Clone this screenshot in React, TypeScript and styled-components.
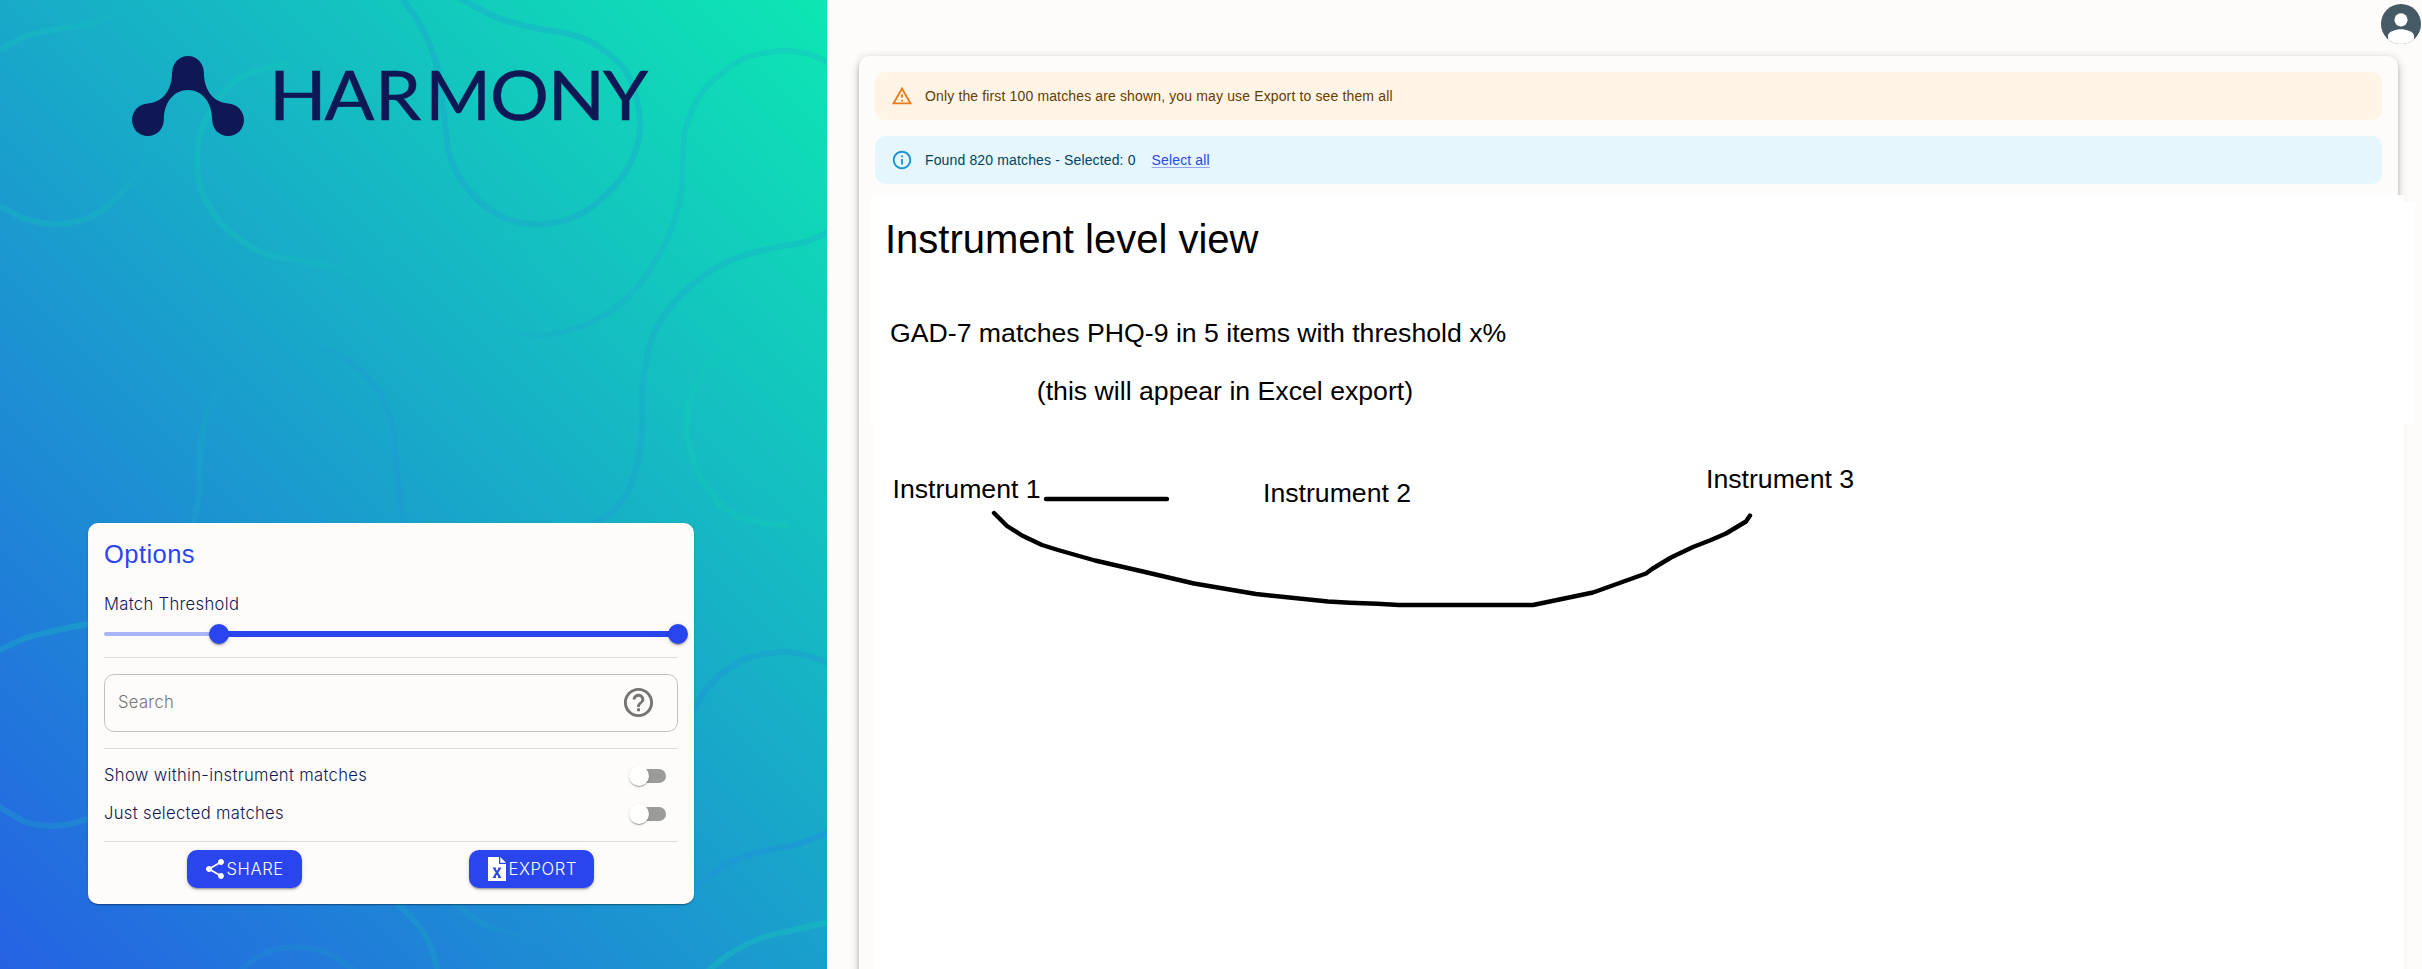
import React from "react";
import styled, { createGlobalStyle } from "styled-components";
import { MdHelpOutline, MdShare } from "react-icons/md";

const colors = {
  primary: "#2a45ed",
  navy: "#0f1854",
  paper: "#fefcfb",
};

const GlobalStyle = createGlobalStyle`
  *, *::before, *::after { box-sizing: border-box; }
  html, body { margin: 0; padding: 0; }
  body {
    background: ${colors.paper};
    font-family: "Liberation Sans", Arial, sans-serif;
    overflow: hidden;
  }
`;

const Page = styled.div`
  display: flex;
  width: 100%;
  height: 969px;
  overflow: hidden;
`;

/* ---------- Sidebar ---------- */

const Sidebar = styled.aside`
  position: relative;
  flex: 0 0 827px;
  display: flex;
  flex-direction: column;
  justify-content: space-between;
  padding: 46px 133px 65px 88px;
  background: linear-gradient(45deg, #2562e3 0%, #0de7b2 100%);
`;

const Waves = styled.svg`
  position: absolute;
  inset: 0;
  fill: none;
  stroke-width: 6;
`;

const Logo = styled.svg`
  position: relative;
  display: block;
  margin-left: 44px;
  fill: ${colors.navy};
`;

const Wordmark = styled.text`
  font-family: Lato, sans-serif;
  font-size: 67px;
  stroke: ${colors.navy};
  stroke-width: 0.5px;
`;

const OptionsCard = styled.section`
  position: relative;
  display: flex;
  flex-direction: column;
  height: 381px;
  padding: 16px;
  border-radius: 10px;
  background: ${colors.paper};
  box-shadow: 0 2px 1px -1px rgba(0, 0, 0, 0.2), 0 1px 1px rgba(0, 0, 0, 0.14),
    0 1px 3px rgba(0, 0, 0, 0.12);
  color: ${colors.navy};
  font-family: Inter, "Liberation Sans", sans-serif;
  font-size: 16.6px;
  font-weight: 300;
  letter-spacing: 0.33px;
`;

const CardTitle = styled.h2`
  margin: -1px 0 21px;
  color: ${colors.primary};
  font: 400 25.5px/32px "Liberation Sans", sans-serif;
  letter-spacing: 0.45px;
`;

const Label = styled.span`
  line-height: 26px;
`;

const Slider = styled.div`
  display: flex;
  align-items: center;
  height: 20px;
  margin: 7px 0 13px;
`;

const SliderRest = styled.div`
  width: 115px;
  height: 4px;
  border-radius: 2px;
  background: #aab5f8;
`;

const SliderRange = styled.div`
  flex: 1;
  height: 6px;
  background: ${colors.primary};
`;

const Thumb = styled.div`
  flex: none;
  width: 20px;
  height: 20px;
  margin: 0 -10px;
  border-radius: 50%;
  background: ${colors.primary};
  box-shadow: 0 3px 1px -2px rgba(0, 0, 0, 0.2), 0 2px 2px rgba(0, 0, 0, 0.14),
    0 1px 5px rgba(0, 0, 0, 0.12);
`;

const Divider = styled.hr`
  flex: none;
  width: 100%;
  height: 1px;
  margin: 0;
  border: 0;
  background: #dddcdc;
`;

const SearchBox = styled.div`
  display: flex;
  align-items: center;
  justify-content: space-between;
  height: 58px;
  margin: 16px 0;
  padding: 0 21px 2px 13px;
  border: 1px solid #c3c2c2;
  border-radius: 10px;
  color: #757472;
`;

const SwitchRows = styled.div`
  padding: 8px 0;
`;

const SwitchRow = styled.div`
  display: flex;
  align-items: center;
  justify-content: space-between;
  height: 38px;
  padding-bottom: 2px;
`;

const Switch = styled.div`
  display: flex;
  align-items: center;
  width: 34px;
  height: 14px;
  margin: 1px 12px 0 0;
  border-radius: 7px;
  background: #9b9b9a;

  &::before {
    content: "";
    width: 20px;
    height: 20px;
    margin-left: -3px;
    border-radius: 50%;
    background: #fff;
    box-shadow: 0 2px 1px -1px rgba(0, 0, 0, 0.2), 0 1px 1px rgba(0, 0, 0, 0.14),
      0 1px 3px rgba(0, 0, 0, 0.12);
  }
`;

const Actions = styled.div`
  display: flex;
  justify-content: space-around;
  margin: 8px 1px 0 -1px;
`;

const Button = styled.button<{ $width: number }>`
  display: flex;
  align-items: center;
  width: ${(p) => p.$width}px;
  height: 38px;
  padding: 0 0 1px 16px;
  border: 0;
  border-radius: 10px;
  background: ${colors.primary};
  color: #fff;
  font: inherit;
  letter-spacing: 0.6px;
  box-shadow: 0 3px 1px -2px rgba(0, 0, 0, 0.2), 0 2px 2px rgba(0, 0, 0, 0.14),
    0 1px 5px rgba(0, 0, 0, 0.12);

  svg { flex: none; margin-top: 1px; }
`;

/* ---------- Results ---------- */

const Main = styled.main`
  flex: 1;
  display: flex;
  flex-direction: column;
  padding-left: 32px;
`;

const TopBar = styled.header`
  flex: none;
  display: flex;
  justify-content: flex-end;
  height: 56px;
  padding: 4px 1px 0 0;
`;

const Results = styled.section`
  flex: none;
  display: flex;
  flex-direction: column;
  gap: 16px;
  height: 960px;
  margin-right: 24px;
  padding: 16px;
  border-radius: 10px;
  background: ${colors.paper};
  box-shadow: 0 3px 3px -2px rgba(0, 0, 0, 0.2), 0 3px 4px rgba(0, 0, 0, 0.14),
    0 1px 8px rgba(0, 0, 0, 0.12), 0 5px 12px rgba(0, 0, 0, 0.12);
`;

const Alert = styled.div<{ $tone: "warning" | "info" }>`
  flex: none;
  display: flex;
  align-items: center;
  gap: 12px;
  height: 48px;
  padding: 0 16px;
  border-radius: 10px;
  background: ${(p) => (p.$tone === "warning" ? "#fff4e5" : "#e5f6fd")};
  color: ${(p) => (p.$tone === "warning" ? "#663c00" : "#014361")};
  font-size: 14px;
  letter-spacing: 0.14px;

  svg { fill: ${(p) => (p.$tone === "warning" ? "#ed6c02" : "#0288d1")}; opacity: 0.9; }
`;

const SelectAll = styled.a`
  margin-left: 4px;
  color: ${colors.primary};
  text-decoration: underline;
  text-decoration-color: rgba(42, 69, 237, 0.45);
  text-underline-offset: 2px;
`;

const Board = styled.div`
  position: relative;
  flex: 1;
  margin: -5px -22px 0 -2px;
  background: #fff;

  &::before {
    content: "";
    position: absolute;
    top: 7px;
    left: -4px;
    right: -11px;
    height: 222px;
    background: #fff;
  }
`;

const Note = styled.div<{ $x: number; $baseline: number; $size?: number }>`
  position: absolute;
  left: ${(p) => p.$x - 873}px;
  top: ${(p) => p.$baseline - 195 - 36}px;
  line-height: 0;
  white-space: pre;
  color: #000;
  font-size: ${(p) => p.$size ?? 26.667}px;

  &::before {
    content: "";
    display: inline-block;
    height: 36px;
  }
`;

const Strokes = styled.svg`
  position: absolute;
  left: 0;
  top: 0;
  fill: none;
  stroke: #000;
  stroke-width: 4.4;
  stroke-linecap: round;
  stroke-linejoin: round;
`;

type Point = [number, number];

/* Smooth curve through every point (Catmull-Rom turned into Béziers). */
function smooth(points: Point[]): string {
  let d = `M${points[0][0]} ${points[0][1]}`;
  for (let i = 0; i < points.length - 1; i++) {
    const a = points[i - 1] ?? points[i];
    const b = points[i];
    const c = points[i + 1];
    const e = points[i + 2] ?? c;
    d += ` C${b[0] + (c[0] - a[0]) / 6} ${b[1] + (c[1] - a[1]) / 6} ${c[0] - (e[0] - b[0]) / 6} ${
      c[1] - (e[1] - b[1]) / 6
    } ${c[0]} ${c[1]}`;
  }
  return d;
}

interface Wave {
  color: string;
  points: Point[];
  /* x1, y1, x2, y2: the line is invisible at the first point, full at the second */
  fade?: [number, number, number, number];
  opacity: number;
}

const GREEN = "#12cfb4";
const BLUE = "#1f90dc";

const waves: Wave[] = [
  { color: GREEN, opacity: 0.22, fade: [135, 0, 60, 30], points: [[132, 0], [116, 13], [95, 23], [58, 29], [26, 36], [0, 50]] },
  { color: GREEN, opacity: 0.22, fade: [150, 130, 90, 215], points: [[149, 135], [140, 170], [106, 207], [82, 220], [55, 224], [26, 219], [0, 206]] },
  { color: GREEN, opacity: 0.26, fade: [390, 290, 240, 240], points: [[290, 64], [262, 69], [233, 83], [204, 123], [197, 160], [204, 197], [228, 230], [265, 253], [302, 261], [339, 269], [381, 290]] },
  { color: BLUE, opacity: 0.25, points: [[402, -2], [423, 30], [437, 67], [444, 113], [450, 157], [471, 193], [503, 217], [543, 224], [582, 213], [619, 181], [638, 143], [639, 110], [625, 70], [593, 43], [565, 33], [540, 29], [498, 18], [460, -2]] },
  { color: BLUE, opacity: 0.17, fade: [470, 320, 560, 300], points: [[830, 63], [805, 53], [779, 51], [741, 60], [704, 90], [686, 127], [683, 160], [680, 200], [662, 250], [625, 300], [580, 327], [540, 335], [498, 328], [472, 317]] },
  { color: BLUE, opacity: 0.2, points: [[830, 231], [805, 242], [768, 249], [725, 263], [683, 293], [654, 333], [643, 380], [642, 433], [635, 473], [619, 505], [590, 527]] },
  { color: GREEN, opacity: 0.3, fade: [746, 335, 700, 400], points: [[746, 340], [709, 365], [690, 400], [688, 440], [704, 482], [730, 512], [762, 523], [790, 525]] },
  { color: BLUE, opacity: 0.22, fade: [295, 340, 360, 370], points: [[302, 344], [320, 348], [344, 357], [376, 387], [392, 423], [396, 460], [400, 500], [405, 526]] },
  { color: GREEN, opacity: 0.13, fade: [235, 365, 205, 440], points: [[228, 377], [209, 407], [201, 443], [199, 493], [193, 526]] },
  { color: GREEN, opacity: 0.27, points: [[95, 623], [58, 630], [26, 638], [-2, 651]] },
  { color: GREEN, opacity: 0.2, points: [[-2, 806], [26, 822], [53, 826], [74, 823], [95, 816]] },
  { color: BLUE, opacity: 0.3, points: [[830, 664], [805, 655], [779, 652], [741, 661], [709, 686], [690, 717]] },
  { color: BLUE, opacity: 0.5, fade: [640, 969, 760, 840], points: [[830, 831], [799, 844], [768, 850], [731, 862], [693, 890], [667, 925], [651, 972]] },
  { color: GREEN, opacity: 0.32, points: [[830, 922], [794, 930], [762, 938], [731, 953], [707, 972]] },
  { color: GREEN, opacity: 0.18, points: [[393, 899], [418, 925], [431, 947], [438, 972]] },
  { color: GREEN, opacity: 0.12, fade: [545, 938, 470, 915], points: [[450, 899], [482, 923], [519, 935], [545, 937]] },
  { color: GREEN, opacity: 0.09, points: [[238, 972], [265, 953], [296, 947], [328, 953], [357, 972]] },
];

const curve: Point[] = [
  [994, 513], [1007, 526], [1022, 535.5], [1042, 545], [1058, 550], [1095, 560.5], [1145, 572],
  [1194, 583.5], [1256, 594], [1328, 601.5], [1350, 602.7], [1377, 603.7], [1399, 605], [1533, 605],
  [1593, 592.5], [1646, 573.5], [1652, 569], [1671, 557.5], [1693, 547], [1711, 540], [1726, 533.5],
  [1746, 521.5], [1750, 515.5],
];

/* letter, origin and horizontal stretch */
const letters: [string, number, number][] = [
  ["H", 137, 1.13],
  ["A", 192.5, 1.1],
  ["R", 243, 1.1],
  ["M", 293.5, 1.05],
  ["O", 358, 1.1],
  ["N", 415.8, 1.12],
  ["Y", 471, 1.08],
];

function WaveBackground() {
  return (
    <Waves width="827" height="969" viewBox="0 0 827 969">
      <defs>
        {waves.map((w, i) =>
          w.fade ? (
            <linearGradient
              key={i}
              id={`wave-${i}`}
              gradientUnits="userSpaceOnUse"
              x1={w.fade[0]}
              y1={w.fade[1]}
              x2={w.fade[2]}
              y2={w.fade[3]}
            >
              <stop offset="0" stopColor={w.color} stopOpacity="0" />
              <stop offset="1" stopColor={w.color} />
            </linearGradient>
          ) : null
        )}
      </defs>
      {waves.map((w, i) => (
        <path key={i} d={smooth(w.points)} stroke={w.fade ? `url(#wave-${i})` : w.color} opacity={w.opacity} />
      ))}
    </Waves>
  );
}

function HarmonyLogo() {
  return (
    <Logo width="530" height="110" viewBox="0 -10 530 110">
      <path d="M56 0 C64.800 0 71.700 7.200 71.900 16.500 C72 34 81 46 96 47.500 C105 47.800 112 55 112 64 C112 73 105 80 96.200 80 C87.200 80 80.300 73 80.200 64 C80 46 70 34 56 34 C42 34 32 46 31.800 64 C31.700 73 24.800 80 15.800 80 C7 80 0 73 0 64 C0 55 7 47.800 16 47.500 C31 46 40 34 40.100 16.500 C40.300 7.200 47.200 0 56 0 Z" />
      {letters.map(([letter, x, stretch]) => (
        <Wordmark key={letter} transform={`translate(${x} 64) scale(${stretch} 1)`}>
          {letter}
        </Wordmark>
      ))}
    </Logo>
  );
}

function ExcelFileIcon() {
  return (
    <svg width="24" height="24" viewBox="0 0 24 24">
      <path fill="#fff" d="M3 0H14V7H21V24H3Z M15.200 0L21 5.800H15.200Z" />
      <path
        fill="none"
        stroke={colors.primary}
        strokeWidth="2.200"
        d="M9.200 11.500L14.800 20M14.800 11.500L9.200 20"
      />
      <path
        fill="none"
        stroke={colors.primary}
        strokeWidth="1.300"
        d="M7.800 11.200H11M13 11.200H16.200M7.800 20.300H11M13 20.300H16.200"
      />
    </svg>
  );
}

function Avatar() {
  return (
    <svg width="40" height="40" viewBox="0 0 40 40">
      <clipPath id="avatar-clip">
        <circle cx="20" cy="20" r="20" />
      </clipPath>
      <circle cx="20" cy="20" r="20" fill="#455a64" />
      <g fill="#fff" clipPath="url(#avatar-clip)">
        <circle cx="20" cy="15.800" r="6.600" />
        <path d="M7 40V32C7 27.500 15 25.300 20 25.300S33 27.500 33 32V40Z" />
      </g>
    </svg>
  );
}

export default function App() {
  return (
    <Page>
      <GlobalStyle />
      <Sidebar>
        <WaveBackground />
        <HarmonyLogo />
        <OptionsCard>
          <CardTitle>Options</CardTitle>
          <Label>Match Threshold</Label>
          <Slider>
            <SliderRest />
            <Thumb />
            <SliderRange />
            <Thumb />
          </Slider>
          <Divider />
          <SearchBox>
            <span>Search</span>
            <MdHelpOutline size={35} />
          </SearchBox>
          <Divider />
          <SwitchRows>
            <SwitchRow>
              <span>Show within-instrument matches</span>
              <Switch />
            </SwitchRow>
            <SwitchRow>
              <span>Just selected matches</span>
              <Switch />
            </SwitchRow>
          </SwitchRows>
          <Divider />
          <Actions>
            <Button $width={115}>
              <MdShare size={24} />
              SHARE
            </Button>
            <Button $width={125}>
              <ExcelFileIcon />
              EXPORT
            </Button>
          </Actions>
        </OptionsCard>
      </Sidebar>
      <Main>
        <TopBar>
          <Avatar />
        </TopBar>
        <Results>
          <Alert $tone="warning">
            <svg width="22" height="22" viewBox="0 0 24 24">
              <path d="M12 5.990L19.530 19H4.470L12 5.990M12 2L1 21h22L12 2zm1 14h-2v2h2v-2zm0-6h-2v4h2v-4z" />
            </svg>
            <span>Only the first 100 matches are shown, you may use Export to see them all</span>
          </Alert>
          <Alert $tone="info">
            <svg width="22" height="22" viewBox="0 0 24 24">
              <path d="M11 7h2v2h-2zm0 4h2v6h-2zm1-9C6.480 2 2 6.480 2 12s4.480 10 10 10 10-4.480 10-10S17.520 2 12 2zm0 18c-4.410 0-8-3.590-8-8s3.590-8 8-8 8 3.590 8 8-3.590 8-8 8z" />
            </svg>
            <span>Found 820 matches - Selected: 0</span>
            <SelectAll>Select all</SelectAll>
          </Alert>
          <Board>
            <Strokes width="1531" height="774" viewBox="873 195 1531 774">
              <path d="M1046 499H1167" />
              <path d={"M" + curve.map((p) => p.join(" ")).join("L")} />
            </Strokes>
            <Note $x={885} $baseline={253} $size={40}>Instrument level view</Note>
            <Note $x={890} $baseline={342}>GAD-7 matches PHQ-9 in 5 items with threshold x%</Note>
            <Note $x={1036.800} $baseline={400}>(this will appear in Excel export)</Note>
            <Note $x={892.500} $baseline={498}>Instrument 1</Note>
            <Note $x={1263} $baseline={502}>Instrument 2</Note>
            <Note $x={1706} $baseline={488}>Instrument 3</Note>
          </Board>
        </Results>
      </Main>
    </Page>
  );
}
